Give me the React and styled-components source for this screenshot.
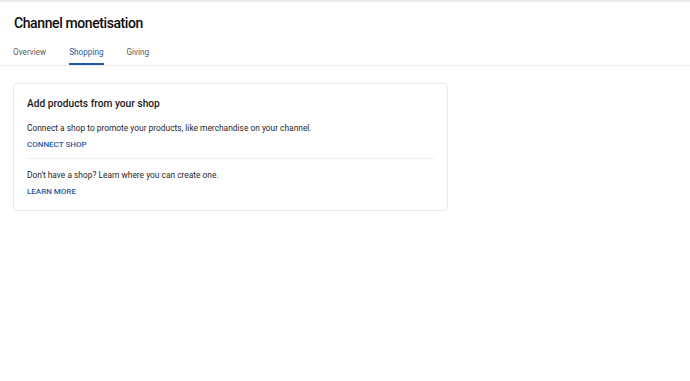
import React from "react";
import styled, { createGlobalStyle } from "styled-components";

const Global = createGlobalStyle`
  html, body { margin: 0; padding: 0; background: #fff; }
  body { font-family: Roboto, "Noto Sans", Arial, sans-serif; color: #0d0d0d; }
`;

const Page = styled.div`
  width: 690px;
  min-height: 381px;
  border-top: 2px solid #ececec;
  box-sizing: border-box;
`;

const Header = styled.header`
  padding: 12px 0 0 14px;
  border-bottom: 1px solid #ececec;
`;

const Title = styled.h1`
  margin: 0;
  font-family: Roboto, "Noto Sans", sans-serif;
  font-weight: 500;
  font-size: 14px;
  letter-spacing: -0.4px;
  line-height: 18px;
  color: #0d0d0d;
`;

const Tabs = styled.nav`
  display: flex;
  gap: 23px;
  margin-top: 14px;
  margin-left: -1px;
`;

const Tab = styled.div`
  font-family: Roboto, "Noto Sans", sans-serif;
  font-size: 8.2px;
  line-height: 12px;
  padding-bottom: 5px;
  color: ${(p) => (p.$active ? "#1e5aa5" : "#606060")};
  border-bottom: 2px solid ${(p) => (p.$active ? "#1e5aa5" : "transparent")};
`;

const Body = styled.main`
  padding: 17px 0 0 13px;
`;

const Card = styled.section`
  width: 435px;
  box-sizing: border-box;
  border: 1px solid #e8e8e8;
  border-radius: 4px;
  padding: 13px 13px 13px 13px;
`;

const CardTitle = styled.h2`
  margin: 0;
  font-size: 10.2px;
  font-weight: 500;
  line-height: 14px;
  color: #1a1a1a;
`;

const Text = styled.p`
  margin: ${(p) => p.$mt || 0}px 0 0;
  font-size: 8.4px;
  line-height: 12px;
  color: #1f1f1f;
`;

const Link = styled.a`
  display: block;
  margin-top: 5px;
  font-size: 8px;
  line-height: 11px;
  font-weight: 500;
  color: #1f5a9f;
  text-decoration: none;
  text-transform: uppercase;
`;

const Divider = styled.hr`
  border: 0;
  border-top: 1px solid #ededed;
  margin: 8px 0 0;
`;

export default function App() {
  return (
    <Page>
      <Global />
      <Header>
        <Title>Channel monetisation</Title>
        <Tabs>
          <Tab>Overview</Tab>
          <Tab $active>Shopping</Tab>
          <Tab>Giving</Tab>
        </Tabs>
      </Header>
      <Body>
        <Card>
          <CardTitle>Add products from your shop</CardTitle>
          <Text $mt={11}>Connect a shop to promote your products, like merchandise on your channel.</Text>
          <Link>Connect shop</Link>
          <Divider />
          <Text $mt={10}>Don't have a shop? Learn where you can create one.</Text>
          <Link>Learn more</Link>
        </Card>
      </Body>
    </Page>
  );
}
